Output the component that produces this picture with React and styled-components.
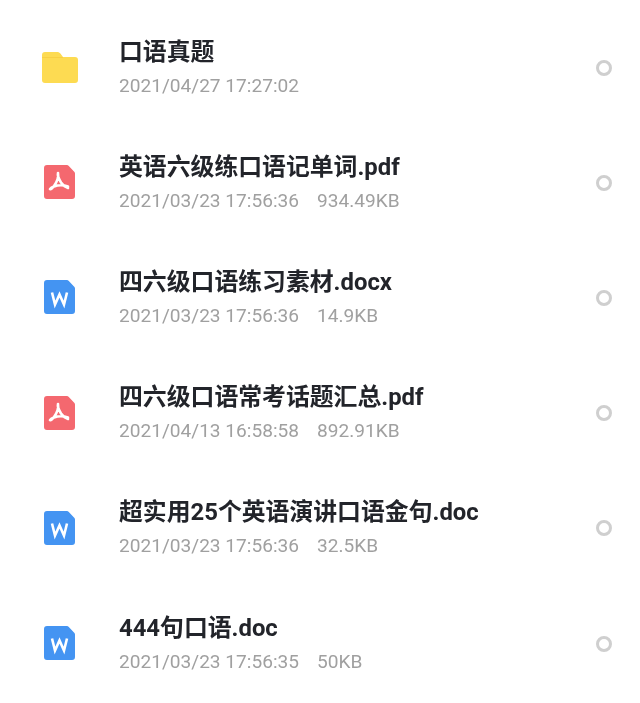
import React from "react";
import styled, { createGlobalStyle } from "styled-components";

const Global = createGlobalStyle`
  html, body { margin: 0; background: #fff; }
  body { font-family: Roboto, "Noto Sans CJK SC", sans-serif; }
`;
const List = styled.div`
  width: 640px;
  height: 703px;
  padding-top: 10px;
  box-sizing: border-box;
  overflow: hidden;
  filter: blur(0.35px);
`;
const Row = styled.div`
  display: flex;
  align-items: center;
  height: 115.2px;
  padding: 0 28px 0 41px;
  box-sizing: border-box;
`;
const IconSlot = styled.div`
  width: 78px;
  flex: none;
  display: flex;
  padding-left: ${p => (p.$file ? 3 : 1)}px;
  box-sizing: border-box;
  svg { display: block; }
`;
const Body = styled.div`
  flex: 1;
  min-width: 0;
`;
const Title = styled.div`
  margin-top: 1px;
  font-size: 23.85px;
  line-height: 30px;
  font-weight: 700;
  color: #22242a;
  white-space: nowrap;
`;
const Meta = styled.div`
  display: flex;
  gap: 18px;
  margin-top: 5px;
  font-size: 19.1px;
  line-height: 28px;
  color: #a0a0a0;
  white-space: nowrap;
`;
const Radio = styled.div`
  width: 16px;
  height: 16px;
  box-sizing: border-box;
  flex: none;
  border: 3px solid #cfcfcf;
  border-radius: 50%;
`;

const FolderIcon = () => (
  <svg width="36" height="31" viewBox="0 0 36 31">
    <path d="M3 0h12c1.600 0 2.600.6 3.600 1.800L21 5H33a3 3 0 0 1 3 3v20a3 3 0 0 1-3 3H3a3 3 0 0 1-3-3V3a3 3 0 0 1 3-3z" fill="#fddb52" />
    <path d="M0 5.500h21" stroke="#f6cc40" strokeWidth="0.800" fill="none" />
  </svg>
);
const sheet = "M3 0H22.500C23.500 0 24 .3 24.800.9L30 6.500C30.700 7.200 31 7.800 31 8.800V31a3 3 0 0 1-3 3H3a3 3 0 0 1-3-3V3a3 3 0 0 1 3-3z";
const PdfIcon = () => (
  <svg width="31" height="35" viewBox="0 0 31 35">
    <path d={sheet} fill="#f4686f" />
    <path
      d="M14 8c-.8 3 1.200 6.500 3 9.500 2 3 4 4.500 7 5.500 M14 8c.8 4-1.500 9.500-4 13-1.200 1.700-3 3.500-4 3 M6 24c3-3.500 11-5 18-2.500"
      stroke="#fff"
      strokeWidth="2.600"
      fill="none"
      strokeLinecap="round"
    />
  </svg>
);
const WordIcon = () => (
  <svg width="31" height="35" viewBox="0 0 31 35">
    <path d={sheet} fill="#4494f2" />
    <path d="M8 12.500l3 12 4.500-10 4.500 10 3-12" stroke="#fff" strokeWidth="2.600" fill="none" />
  </svg>
);

const files = [
  { icon: "folder", name: "口语真题", date: "2021/04/27 17:27:02" },
  { icon: "pdf", name: "英语六级练口语记单词.pdf", date: "2021/03/23 17:56:36", size: "934.49KB" },
  { icon: "word", name: "四六级口语练习素材.docx", date: "2021/03/23 17:56:36", size: "14.9KB" },
  { icon: "pdf", name: "四六级口语常考话题汇总.pdf", date: "2021/04/13 16:58:58", size: "892.91KB" },
  { icon: "word", name: "超实用25个英语演讲口语金句.doc", date: "2021/03/23 17:56:36", size: "32.5KB" },
  { icon: "word", name: "444句口语.doc", date: "2021/03/23 17:56:35", size: "50KB" },
];
const icons = { folder: FolderIcon, pdf: PdfIcon, word: WordIcon };

export default function App() {
  return (
    <>
      <Global />
      <List>
        {files.map(f => {
          const Icon = icons[f.icon];
          return (
            <Row key={f.name}>
              <IconSlot $file={f.icon !== "folder"}><Icon /></IconSlot>
              <Body>
                <Title>{f.name}</Title>
                <Meta>
                  <span>{f.date}</span>
                  {f.size && <span>{f.size}</span>}
                </Meta>
              </Body>
              <Radio />
            </Row>
          );
        })}
      </List>
    </>
  );
}
